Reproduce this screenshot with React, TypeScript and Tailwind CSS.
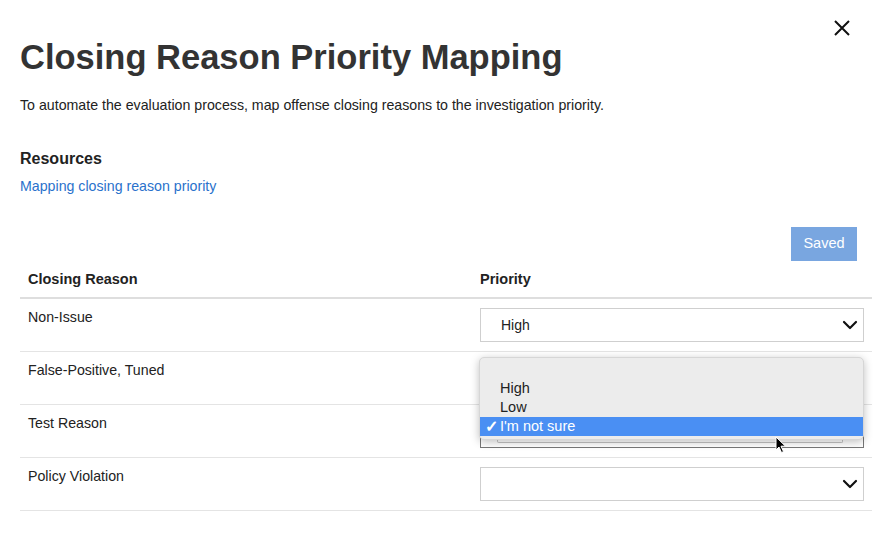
interface Row {
  reason: string
  priority: string
}

const ROWS: Row[] = [
  { reason: 'Non-Issue', priority: 'High' },
  { reason: 'False-Positive, Tuned', priority: '' },
  { reason: 'Test Reason', priority: '' },
  { reason: 'Policy Violation', priority: '' },
]

const OPTIONS = ['', 'High', 'Low', "I'm not sure"]

function CloseIcon() {
  return (
    <svg width="18" height="18" viewBox="0 0 18 18" fill="none" stroke="#111" strokeWidth="2">
      <path d="M2 2 L16 16 M16 2 L2 16" />
    </svg>
  )
}

function Chevron() {
  return (
    <svg width="16" height="10" viewBox="0 0 16 10" fill="none" stroke="#111" strokeWidth="2.2" strokeLinecap="round" strokeLinejoin="round">
      <path d="M2 2 L8 8 L14 2" />
    </svg>
  )
}

function Cursor() {
  return (
    <svg width="12" height="18" viewBox="0 0 12 18">
      <path d="M1 1 L1 14 L4 11 L6.5 16.5 L8.5 15.6 L6 10.2 L10.5 10.2 Z" fill="#000" stroke="#fff" strokeWidth="1" />
    </svg>
  )
}

function Select({ value, focused }: { value: string; focused?: boolean }) {
  return (
    <div
      className={
        focused
          ? 'relative h-[34px] bg-white border border-[#777] flex items-center pl-5 pr-[5px]'
          : 'relative h-[34px] bg-white border border-[#cfcfcf] flex items-center pl-5 pr-[5px]'
      }
    >
      <span className="flex-1 text-[14px] text-[#222]">{value}</span>
      <Chevron />
      {focused && <div className="absolute left-[16px] right-[20px] bottom-[4px] h-[4px] border border-t-0 border-[#c4c4c4] rounded-b-[2px]" />}
    </div>
  )
}

function OptionsMenu() {
  return (
    <div className="absolute left-[7px] right-[8px] top-[-4px] bg-[#ececec] rounded-[5px] shadow-[0_2px_8px_rgba(0,0,0,0.25)] border border-[#d6d6d6] pt-[2px] pb-[3px] z-10">
      {OPTIONS.map(opt => {
        const active = opt === "I'm not sure"
        return (
          <div
            key={opt || 'blank'}
            className={
              active
                ? 'relative h-[19px] flex items-center pl-[20px] bg-[#4a8ff3] text-white text-[14.5px]'
                : 'relative h-[19px] flex items-center pl-[20px] text-[#222] text-[14.5px]'
            }
          >
            {active && <span className="absolute left-[5px] text-[16px] font-bold">✓</span>}
            {opt}
          </div>
        )
      })}
    </div>
  )
}

export default function App() {
  return (
    <div
      className="relative w-[874px] h-[539px] bg-white overflow-hidden text-[#222]"
      style={{ fontFamily: '"Liberation Sans", Arial, sans-serif' }}
    >
      <button className="absolute right-[23px] top-[19px]">
        <CloseIcon />
      </button>

      <div className="pl-5 pr-[2px] pt-[37px]">
        <h1 className="text-[34.5px] leading-[40px] font-bold text-[#333]">Closing Reason Priority Mapping</h1>
        <p className="mt-[18px] text-[14.2px] leading-[20px] text-[#222]">
          To automate the evaluation process, map offense closing reasons to the investigation priority.
        </p>

        <h2 className="mt-[33px] text-[16px] leading-[22px] font-bold text-[#222]">Resources</h2>
        <a className="block mt-[6px] text-[14.2px] leading-[20px] text-[#2a72cc]">Mapping closing reason priority</a>

        <div className="flex justify-end mt-[31px] pr-[15px]">
          <button className="h-[34px] w-[66px] flex items-center justify-center bg-[#79a6e0] text-white text-[14.5px]">Saved</button>
        </div>

        <div className="mt-[8px]">
          <div className="flex border-b-2 border-[#dedede] pb-[8px]">
            <div className="w-[452px] px-2 text-[14.5px] leading-[20px] font-bold">Closing Reason</div>
            <div className="flex-1 px-2 text-[14.5px] leading-[20px] font-bold">Priority</div>
          </div>

          {ROWS.map((row, i) => (
            <div key={row.reason} className="flex border-b border-[#e4e4e4] py-[9px]">
              <div className="w-[452px] px-2 text-[14.2px] leading-[18px]">{row.reason}</div>
              <div className="relative flex-1 px-2">
                <Select value={row.priority} focused={i === 2} />
                {i === 1 && <OptionsMenu />}
              </div>
            </div>
          ))}
        </div>
      </div>

      <div className="absolute left-[775px] top-[436px] z-20">
        <Cursor />
      </div>
    </div>
  )
}
